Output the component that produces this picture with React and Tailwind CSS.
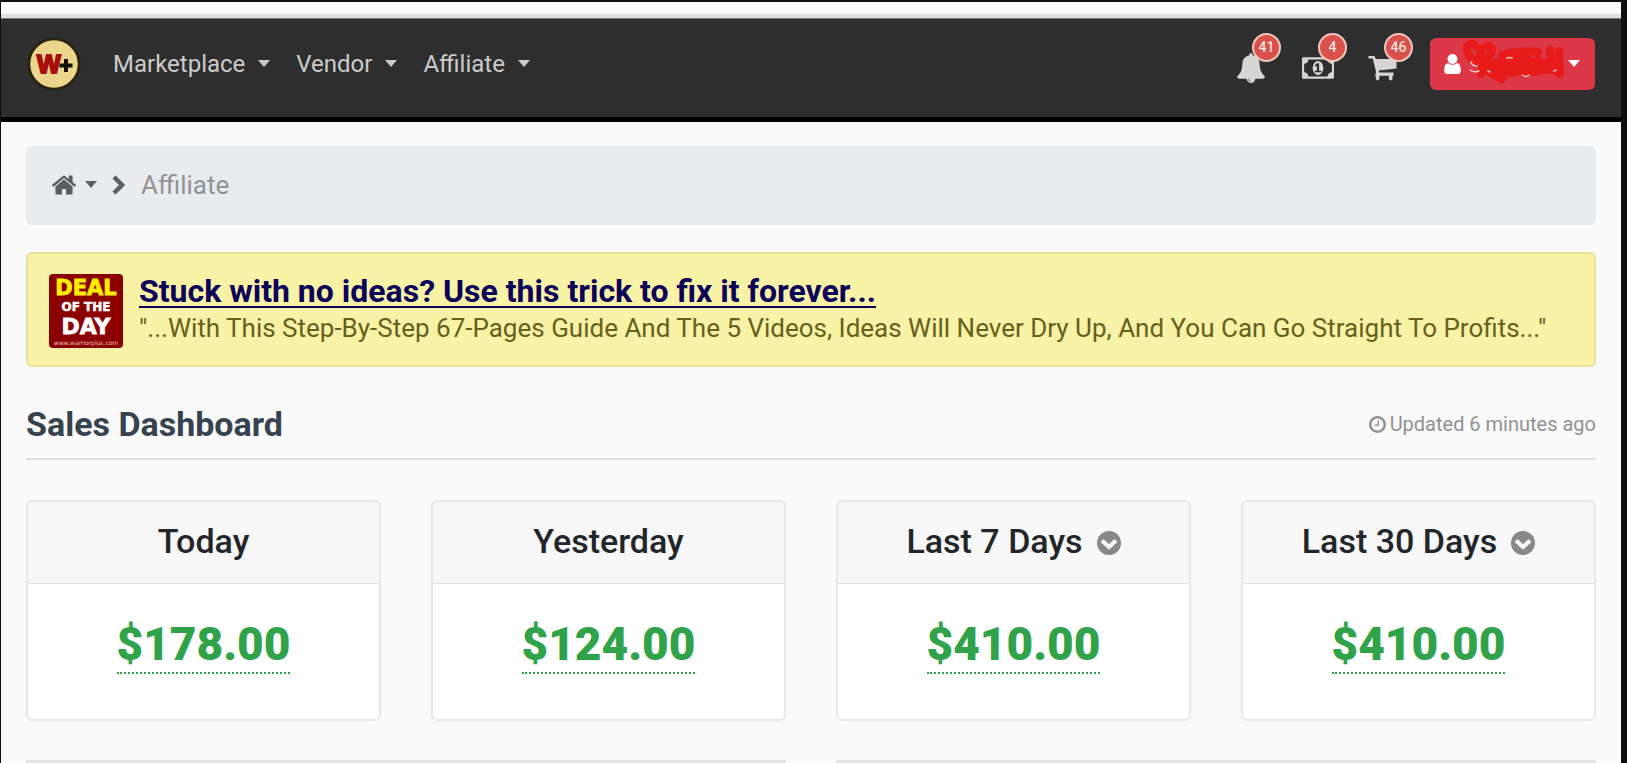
import { useState } from 'react'

const icons = {
  bell: {
    box: '0 0 1792 1792',
    d: 'M912 1696q0-16-16-16-59 0-101.5-42.5t-42.5-101.5q0-16-16-16t-16 16q0 73 51.5 124.5t124.5 51.5q16 0 16-16zm816-288q0 52-38 90t-90 38h-448q0 106-75 181t-181 75-181-75-75-181h-448q-52 0-90-38t-38-90q50-42 91-88t85-119.5 74.5-158.5 50-206 19.5-260q0-152 117-282.5t307-158.5q-8-19-8-39 0-40 28-68t68-28 68 28 28 68q0 20-8 39 190 28 307 158.5t117 282.5q0 139 19.5 260t50 206 74.5 158.5 85 119.5 91 88z',
  },
  money: {
    box: '0 0 1920 1792',
    d: 'M768 1152h384v-96h-128v-448h-114l-148 137 77 80q42-37 55-57h2v288h-128v96zm512-256q0 70-21 142t-59.5 134-101.5 101-138 39-138-39-101.5-101-59.5-134-21-142 21-142 59.5-134 101.5-101 138-39 138 39 101.5 101 59.5 134 21 142zm512 256v-512q-106 0-181-75t-75-181h-1152q0 106-75 181t-181 75v512q106 0 181 75t75 181h1152q0-106 75-181t181-75zm128-832v1152q0 26-19 45t-45 19h-1792q-26 0-45-19t-19-45v-1152q0-26 19-45t45-19h1792q26 0 45 19t19 45z',
  },
  cart: {
    box: '0 0 30 26',
    d: 'M.5 1h6l1.3 3H28.5v9.5L10.6 15.6l.5 1.8h14.4v3.4h-1v2.8a1.8 1.8 0 0 1-3.6 0v-2.8h-9.5v2.8a1.8 1.8 0 0 1-3.6 0v-2.8H6.8l1.4-3.4L4.8 3.6H.5z',
  },
  user: {
    box: '256 128 1280 1536',
    d: 'M1536 1399q0 109-62.5 187t-150.5 78h-854q-88 0-150.5-78t-62.5-187q0-85 8.5-160.5t31.5-152 58.5-131 94-89 134.5-34.5q131 128 313 128t313-128q76 0 134.5 34.5t94 89 58.5 131 31.5 152 8.5 160.5zm-256-887q0 159-112.5 271.5t-271.5 112.5-271.5-112.5-112.5-271.5 112.5-271.5 271.5-112.5 271.5 112.5 112.5 271.5z',
  },
  home: {
    box: '90 240 1612 1300',
    d: 'M1472 992v480q0 26-19 45t-45 19h-384v-384h-256v384h-384q-26 0-45-19t-19-45v-480q0-1 .5-3t.5-3l575-474 575 474q1 2 1 6zm223-69l-62 74q-8 9-21 11h-3q-13 0-21-7l-692-577-692 577q-12 8-24 7-13-2-21-11l-62-74q-8-10-7-23.5t11-21.5l719-599q32-26 76-26t76 26l244 204v-195q0-14 9-23t23-9h192q14 0 23 9t9 23v408l219 182q10 8 11 21.5t-7 23.5z',
  },
  clock: {
    box: '128 128 1536 1536',
    d: 'M1024 544v448q0 14-9 23t-23 9h-320q-14 0-23-9t-9-23v-64q0-14 9-23t23-9h224v-352q0-14 9-23t23-9h64q14 0 23 9t9 23zm416 352q0-148-73-273t-198-198-273-73-273 73-198 198-73 273 73 273 198 198 273 73 273-73 198-198 73-273zm224 0q0 209-103 385.5t-279.5 279.5-385.5 103-385.5-103-279.5-279.5-103-385.5 103-385.5 279.5-279.5 385.5-103 385.5 103 279.5 279.5 103 385.5z',
  },
}

const menus = ['Marketplace', 'Vendor', 'Affiliate']

const alerts = [
  { icon: 'bell', label: 'Notifications', count: 41, size: 'w-[30px] h-[30px]' },
  { icon: 'money', label: 'Payments', count: 4, size: 'w-8 h-8' },
  { icon: 'cart', label: 'Cart', count: 46, size: 'w-[30px] h-[26px]' },
]

const stats = [
  { title: 'Today', amount: '$178.00' },
  { title: 'Yesterday', amount: '$124.00' },
  { title: 'Last 7 Days', amount: '$410.00', more: true },
  { title: 'Last 30 Days', amount: '$410.00', more: true },
]

function Icon({ name, className }) {
  return (
    <svg viewBox={icons[name].box} fill="currentColor" className={className} aria-hidden="true">
      <path d={icons[name].d} />
    </svg>
  )
}

function Caret() {
  return (
    <svg viewBox="0 0 14 8" fill="currentColor" className="w-3.5 h-2 shrink-0" aria-hidden="true">
      <path d="M1 0h12L7 7z" />
    </svg>
  )
}

function Logo() {
  return (
    <a href="#" aria-label="Home" className="shrink-0">
      <svg viewBox="0 0 54 54" className="w-[54px] h-[54px]">
        <circle cx="27" cy="27" r="25" fill="#ead68c" stroke="#2b2109" strokeWidth="2.5" />
        <text x="10" y="36" fontFamily="Liberation Sans, sans-serif" fontSize="25" fontWeight="900" fill="#a80f0c" stroke="#a80f0c" strokeWidth="2">W</text>
        <path d="M39 22v13M32.500 28.500h13" stroke="#151008" strokeWidth="4" />
      </svg>
    </a>
  )
}

function DealBadge() {
  return (
    <svg viewBox="0 0 74 74" className="w-[74px] h-[74px] shrink-0" fontFamily="DejaVu Sans, sans-serif" fontWeight="700" textAnchor="middle">
      <rect width="74" height="74" rx="4" fill="#8b0000" />
      <text x="37" y="21" fontSize="21" fill="#ffee00" stroke="#ffee00" strokeWidth="0.8">DEAL</text>
      <text x="37" y="37" fontSize="12" fill="#ffffff" stroke="#ffffff" strokeWidth="0.5">OF THE</text>
      <text x="37" y="60" fontSize="22" fill="#ffffff" stroke="#ffffff" strokeWidth="0.8">DAY</text>
      <text x="37" y="71" fontSize="6" fontWeight="400" fill="#f0c0c0">www.warriorplus.com</text>
    </svg>
  )
}

function Scribble() {
  return (
    <svg viewBox="0 0 104 52" className="absolute left-8 top-0 w-[104px] h-[52px]" fill="none" strokeLinecap="round" strokeLinejoin="round" aria-hidden="true">
      <path
        d="M15 9Q9 3 5 9Q4 16 13 24L17 20Q20 7 28 8Q34 12 22 24L19 36M20 30L40 41L46 30M40 17Q55 12 76 14M26 31L50 22L36 34L76 22L48 35L84 28L60 35L90 31L88 12M30 27L44 18L66 22M34 29L86 24M97 13L98 36L82 26"
        stroke="#e81b1b"
        strokeWidth="8"
      />
      <path d="M9 24q1 4 6 4M8 32q4 3 9 1M45 20q3-1 5 0M60 37q4 3 7 0M92 33l2-1M26 33l2 1" stroke="#f3c4c4" strokeWidth="1.500" />
    </svg>
  )
}

function NavBar() {
  return (
    <nav className="flex items-center bg-[#2e2e2e] border-t border-[#777777] px-[26px] pt-[18px] pb-[26px]">
      <Logo />
      <div className="flex items-center gap-[25px] ml-8">
        {menus.map((m) => (
          <button key={m} className="flex items-center gap-3 text-[24px] leading-8 text-[#cbcbcb]">
            {m}
            <Caret />
          </button>
        ))}
      </div>
      <div className="flex items-center ml-auto">
        {alerts.map((a) => (
          <button key={a.icon} aria-label={a.label} className="relative w-[66px] h-[54px] flex items-center pl-1 pt-2 text-[#d6d6d6]">
            <Icon name={a.icon} className={a.size} />
            <span className="absolute left-5 -top-1 w-[29px] h-[29px] rounded-full bg-[#d9504c] border-2 border-[#f3c9bd] text-[#fbe3dc] text-[14px] font-medium leading-[25px] text-center">
              {a.count}
            </span>
          </button>
        ))}
        <button aria-label="Account" className="relative flex items-center justify-between w-[165px] h-[52px] px-3.5 rounded-md bg-[#dc3747] text-white">
          <Icon name="user" className="w-[17px] h-5" />
          <Scribble />
          <Caret />
        </button>
      </div>
    </nav>
  )
}

function StatCard({ stat }) {
  return (
    <section className="bg-white border-2 border-[#e8e8e8] rounded-md overflow-hidden text-center">
      <h3 className="flex items-center justify-center gap-3.5 h-[82px] pb-1 bg-[#f7f7f7] border-b border-[#dfdfdf] text-[34px] leading-10 font-medium text-[#222529]">
        {stat.title}
        {stat.more && (
          <button aria-label={`Change ${stat.title}`} className="pt-1">
            <svg viewBox="0 0 24 24" className="w-6 h-6">
              <circle cx="12" cy="12" r="12" fill="#888888" />
              <path d="M5 9.500l7 6.500 7-6.500" fill="none" stroke="#f7f7f7" strokeWidth="4.200" />
            </svg>
          </button>
        )}
      </h3>
      <div className="pt-8 pb-[45px]">
        <a href="#" className="inline-block border-b-2 border-dotted border-[#30a04a] text-[46px] leading-[56px] font-black text-[#30a34a]">
          {stat.amount}
        </a>
      </div>
    </section>
  )
}

export default function App() {
  const [data] = useState(stats)

  return (
    <div className="min-h-screen bg-[#fafafa] border-t-2 border-l border-r-[6px] border-[#0d0d0d] font-[Roboto,sans-serif]">
      <div className="h-4 border-b-4 border-[#e0e0e0]" />
      <NavBar />
      <div className="h-[5px] bg-black" />

      <main className="px-[25px] pt-6">
        <ol className="flex items-center h-[79px] px-[26px] pb-0.5 rounded-md bg-[#e9ecef] text-[26px] leading-8 text-[#5b5e63]">
          <li>
            <button aria-label="Home menu" className="flex items-center gap-2">
              <Icon name="home" className="w-6 h-5" />
              <Caret />
            </button>
          </li>
          <li className="ml-3.5">
            <svg viewBox="0 0 13 20" className="w-[13px] h-5" fill="none" stroke="currentColor" strokeWidth="4.500" aria-hidden="true">
              <path d="M2 2l8 8-8 8" />
            </svg>
          </li>
          <li className="ml-4 text-[#919395]">Affiliate</li>
        </ol>

        <div className="flex items-start gap-4 mt-[27px] px-[21px] pt-5 pb-[15px] rounded-md bg-[#f8f2a7] border-2 border-[#e8e19a]">
          <DealBadge />
          <div className="min-w-0 pb-0.5">
            <a href="#" className="block text-[32px] leading-[34px] font-bold text-[#0b0058] underline decoration-2 underline-offset-4">
              Stuck with no ideas? Use this trick to fix it forever...
            </a>
            <p className="text-[26px] leading-10 text-[#66601c]">
              "...With This Step-By-Step 67-Pages Guide And The 5 Videos, Ideas Will Never Dry Up, And You Can Go Straight To Profits..."
            </p>
          </div>
        </div>

        <header className="flex items-center justify-between mt-[34px] pb-[11px] border-b-2 border-[#dedede]">
          <h2 className="text-[34px] leading-[46px] font-bold text-[#36434f]">Sales Dashboard</h2>
          <p className="flex items-center gap-1 text-[20px] leading-6 text-[#919191]">
            <Icon name="clock" className="w-[17px] h-[17px]" />
            Updated 6 minutes ago
          </p>
        </header>

        <div className="grid grid-cols-4 gap-[50px] mt-10">
          {data.map((s) => (
            <StatCard key={s.title} stat={s} />
          ))}
        </div>

        <div className="grid grid-cols-2 gap-[50px] mt-[39px]">
          <div className="h-[3px] bg-[#e2e3e7]" />
          <div className="h-[3px] bg-[#e2e3e7]" />
        </div>
      </main>
    </div>
  )
}
